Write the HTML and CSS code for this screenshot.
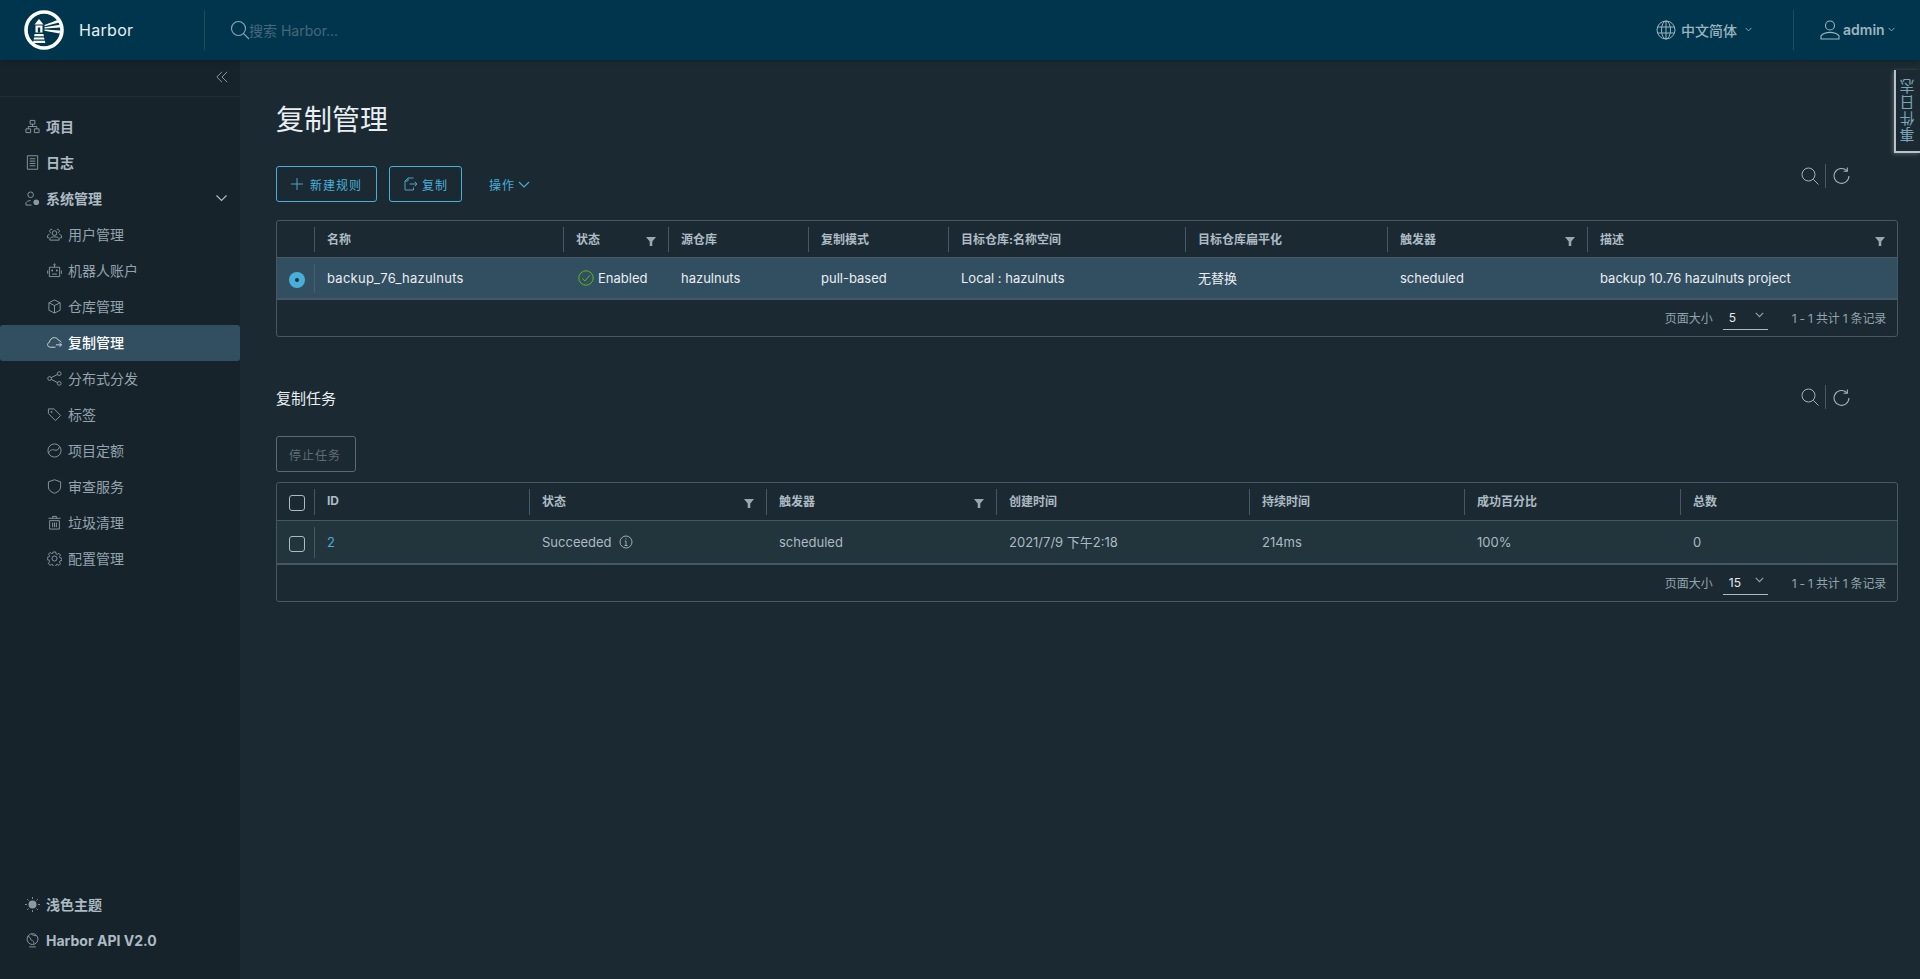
FILE: index.html
```html
<!DOCTYPE html>
<html lang="zh">
<head>
<meta charset="utf-8">
<title>Harbor</title>
<link rel="stylesheet" href="styles.css">
</head>
<body>
<header class="topbar">
  <div class="brand">
    <svg class="logo" viewBox="0 0 40 40">
      <circle cx="20" cy="20" r="18" fill="none" stroke="#fff" stroke-width="3.6"/>
      <path d="M10.500 14.500 L15 9 L19.500 14.500 Z" fill="#fff" stroke="none"/>
      <path d="M11.500 15.500h7v7h-7z" fill="#fff" stroke="none"/>
      <path d="M13.800 17.500h2.400v5h-2.400z" fill="#00364d" stroke="none"/>
      <path d="M10.600 24h8.800l.5 2.200h-9.800zM10.100 27.400h9.900l.5 2.200H9.600zM9.400 30.800h11.400l.5 2.200H9z" fill="#fff" stroke="none"/>
      <path d="M20.500 15l13-5 1.600 2.600-14.600 3.600zM20.500 17.300l15.400-2.500.5 2.800-15.900.9zM20.500 19.600l15.600 1-.4 2.800-15.200-2.600z" fill="#fff" stroke="none"/>
    </svg>
    <span class="brand-name">Harbor</span>
  </div>
  <div class="search">
    <svg class="search-icon" viewBox="0 0 20 20"><circle cx="8.500" cy="8.500" r="7" /><path d="M13.600 13.600 L19 19"/></svg>
    <span class="search-text">搜索 Harbor...</span>
  </div>
  <div class="lang">
    <svg class="globe" viewBox="0 0 20 20"><circle cx="10" cy="10" r="9"/><ellipse cx="10" cy="10" rx="4.500" ry="9"/><path d="M10 1v18M1.600 7h16.800M1.600 13h16.800"/></svg>
    <span>中文简体</span>
    <svg class="caret-lang" viewBox="0 0 8 5"><path d="M.7.7 4 4 7.300.7"/></svg>
  </div>
  <div class="user">
    <svg class="person" viewBox="0 0 20 20"><circle cx="10" cy="5.500" r="4.500"/><path d="M1 19v-3.200c2-2.300 5-3.400 9-3.400s7 1.100 9 3.400V19z"/></svg>
    <span>admin</span>
    <svg class="caret-user" viewBox="0 0 8 5"><path d="M.7.7 4 4 7.300.7"/></svg>
  </div>
</header>

<div class="shell">
  <aside class="sidebar">
    <div class="collapse">
      <svg class="collapse-icon" viewBox="0 0 12 12"><path d="M6 .8.8 6 6 11.200M11.200.8 6 6l5.200 5.200"/></svg>
    </div>
    <nav class="nav">
      <a class="item"><svg class="ic" viewBox="0 0 16 16"><path d="M5.500 1.500h5v4h-5zM1 10.500h5v4H1zM10 10.500h5v4h-5zM8 5.500v2.500M3.500 10.500V8h9v2.500"/></svg>项目</a>
      <a class="item"><svg class="ic" viewBox="0 0 16 16"><path d="M2.500.8h11v14.400h-11zM5 4h6M5 6.500h6M5 9h6M5 11.500h6"/></svg>日志</a>
      <a class="item"><svg class="ic" viewBox="0 0 16 16"><circle cx="6" cy="4" r="3"/><path d="M1 15v-2.500c1-1.500 2.500-2.200 5-2.200M1 15h6"/><circle class="solid" cx="12" cy="12" r="3"/></svg>系统管理<svg class="chev" viewBox="0 0 12 8"><path d="M1 1.500l5 5 5-5"/></svg></a>
      <a class="sub"><svg class="ic" viewBox="0 0 16 16"><circle cx="8" cy="6.500" r="2.500"/><path d="M3 14v-1.500c1-1.500 2.500-2 5-2s4 .5 5 2V14zM5.500 2.500a2 2 0 0 0-1.500 3.700M10.500 2.500a2 2 0 0 1 1.500 3.700M2.800 7.500c-1 .4-1.800 1-2.300 2v2h2M13.200 7.500c1 .4 1.800 1 2.300 2v2h-2"/></svg>用户管理</a>
      <a class="sub"><svg class="ic" viewBox="0 0 16 16"><path d="M2.500 4.500h11v10h-11zM8 4.500V2M.7 8v3.500M15.300 8v3.500M5.500 11.800h5"/><circle cx="8" cy="1.600" r=".8"/><circle class="solid" cx="5.500" cy="8" r="1"/><circle class="solid" cx="10.500" cy="8" r="1"/></svg>机器人账户</a>
      <a class="sub"><svg class="ic" viewBox="0 0 16 16"><path d="M8 1l6 3v8l-6 3-6-3V4zM2 4l6 3 6-3M8 7v8"/></svg>仓库管理</a>
      <a class="sub active"><svg class="ic" viewBox="0 0 16 16"><path d="M9 13H3.500C1.700 13 .6 11.700.6 10.300c0-1.300.9-2.300 2-2.600C3 5 5 2.800 7.800 2.800c2 0 3.700 1.100 4.500 2.900 1.300.2 2.400 1 3 2.200M9.500 10.500h6M13.300 8.500l2.200 2-2.200 2"/></svg>复制管理</a>
      <a class="sub"><svg class="ic" viewBox="0 0 16 16"><circle cx="2.800" cy="8" r="2"/><circle cx="13" cy="2.800" r="2"/><circle cx="13" cy="13.200" r="2"/><path d="M4.600 7l6.600-3.300M4.600 9l6.600 3.300"/></svg>分布式分发</a>
      <a class="sub"><svg class="ic" viewBox="0 0 16 16"><path d="M1.500 2h6l7 7-5.500 5.500-7.500-7.500z"/><circle class="solid" cx="4.800" cy="5.200" r=".9"/></svg>标签</a>
      <a class="sub"><svg class="ic" viewBox="0 0 16 16"><circle cx="8" cy="8" r="7"/><path d="M1.500 11C3 7.500 5 6.500 8 7.500c2.500.8 4 0 5-3"/></svg>项目定额</a>
      <a class="sub"><svg class="ic" viewBox="0 0 16 16"><path d="M8 .8 14.500 3v5.500c0 3-2.500 5.400-6.500 6.700-4-1.300-6.500-3.700-6.500-6.700V3z"/></svg>审查服务</a>
      <a class="sub"><svg class="ic" viewBox="0 0 16 16"><path d="M1.500 3.500h13M6 3.500v-2h4v2M2.800 6h10.400v9H2.800zM6 8v5M8 8v5M10 8v5"/></svg>垃圾清理</a>
      <a class="sub"><svg class="ic" viewBox="0 0 16 16"><circle cx="8" cy="8" r="2.700"/><path d="M6.800 1h2.400l.4 2 1.400.6 1.700-1.100 1.700 1.700-1.100 1.700.6 1.400 2 .4v2.400l-2 .4-.6 1.400 1.100 1.700-1.700 1.700-1.700-1.100-1.400.6-.4 2H6.800l-.4-2-1.400-.6-1.700 1.100-1.700-1.700L2.700 11 2.100 9.600l-2-.4V6.800l2-.4.600-1.400-1.100-1.700 1.700-1.700L5 2.700l1.400-.6z"/></svg>配置管理</a>
    </nav>
    <div class="nav-bottom">
      <a class="item"><svg class="ic" viewBox="0 0 16 16"><circle class="solid" cx="8" cy="8" r="4.300"/><path d="M8 0v2M8 14v2M0 8h2M14 8h2M2.300 2.300l1.400 1.400M12.300 12.300l1.400 1.400M2.300 13.700l1.400-1.400M12.300 3.700l1.400-1.400"/></svg>浅色主题</a>
      <a class="item"><svg class="ic" viewBox="0 0 16 16"><circle cx="8" cy="6.500" r="5.800"/><path d="M3 3.500c2 1 3 1.500 3 3s2 1 3 2.500 0 3 0 3M7 1c1 2 3 1.500 5 2M4.500 14.800h7"/></svg>Harbor API V2.0</a>
    </div>
  </aside>

  <main class="content">
    <h1 class="title">复制管理</h1>
    <div class="toolbar">
      <button class="btn btn-new"><svg class="btn-ic" viewBox="0 0 12 12"><path d="M6 0v12M0 6h12"/></svg>新建规则</button>
      <button class="btn btn-copy"><svg class="btn-ic copy-ic" viewBox="0 0 14 14"><path d="M9.500 1H4L1 4v9h8.500v-2.500M1 4h3V1M5.500 7H13M10.800 4.800 13 7l-2.200 2.200"/></svg>复制</button>
      <button class="btn-link">操作<svg class="btn-chev" viewBox="0 0 12 7"><path d="M1 1l5 5 5-5"/></svg></button>
      <div class="tools">
        <svg class="tool" viewBox="0 0 18 18"><circle cx="7.500" cy="7.500" r="6.500"/><path d="M12.300 12.300 17.500 17.500"/></svg>
        <i class="tool-sep"></i>
        <svg class="tool" viewBox="0 0 16 16"><path d="M13 3.500A7 7 0 1 0 15 8.500M13.500.5v3.500H10"/></svg>
      </div>
    </div>

    <section class="grid grid-a">
      <div class="row head cols-a">
        <div class="cell"></div>
        <div class="cell sep">名称</div>
        <div class="cell sep">状态<svg class="filter" viewBox="0 0 10 10"><path d="M0 1h10L6.300 5.500V10H3.700V5.500z"/></svg></div>
        <div class="cell sep">源仓库</div>
        <div class="cell sep">复制模式</div>
        <div class="cell sep">目标仓库:名称空间</div>
        <div class="cell sep">目标仓库扁平化</div>
        <div class="cell sep">触发器<svg class="filter" viewBox="0 0 10 10"><path d="M0 1h10L6.300 5.500V10H3.700V5.500z"/></svg></div>
        <div class="cell sep">描述<svg class="filter" viewBox="0 0 10 10"><path d="M0 1h10L6.300 5.500V10H3.700V5.500z"/></svg></div>
      </div>
      <div class="row body selected cols-a">
        <div class="cell check"><span class="radio"></span></div>
        <div class="cell sep name">backup_76_hazulnuts</div>
        <div class="cell status"><svg class="ok" viewBox="0 0 16 16"><circle cx="8" cy="8" r="7.200"/><path d="M4.300 8.300l2.600 2.700 5-5.800"/></svg>Enabled</div>
        <div class="cell">hazulnuts</div>
        <div class="cell">pull-based</div>
        <div class="cell">Local : hazulnuts</div>
        <div class="cell">无替换</div>
        <div class="cell">scheduled</div>
        <div class="cell">backup 10.76 hazulnuts project</div>
      </div>
      <div class="pager">
        <span>页面大小</span>
        <span class="size">5<svg class="size-chev" viewBox="0 0 8 5"><path d="M.7.7 4 4 7.300.7"/></svg></span>
        <span class="count">1 - 1 共计 1 条记录</span>
      </div>
    </section>

    <div class="section-head">
      <h2 class="subtitle">复制任务</h2>
      <div class="tools">
        <svg class="tool" viewBox="0 0 18 18"><circle cx="7.500" cy="7.500" r="6.500"/><path d="M12.300 12.300 17.500 17.500"/></svg>
        <i class="tool-sep"></i>
        <svg class="tool" viewBox="0 0 16 16"><path d="M13 3.500A7 7 0 1 0 15 8.500M13.500.5v3.500H10"/></svg>
      </div>
    </div>
    <button class="btn btn-disabled">停止任务</button>

    <section class="grid grid-b">
      <div class="row head cols-b">
        <div class="cell check"><span class="box"></span></div>
        <div class="cell sep">ID</div>
        <div class="cell sep">状态<svg class="filter" viewBox="0 0 10 10"><path d="M0 1h10L6.300 5.500V10H3.700V5.500z"/></svg></div>
        <div class="cell sep">触发器<svg class="filter" viewBox="0 0 10 10"><path d="M0 1h10L6.300 5.500V10H3.700V5.500z"/></svg></div>
        <div class="cell sep">创建时间</div>
        <div class="cell sep">持续时间</div>
        <div class="cell sep">成功百分比</div>
        <div class="cell sep">总数</div>
      </div>
      <div class="row body striped cols-b">
        <div class="cell check"><span class="box"></span></div>
        <div class="cell sep link">2</div>
        <div class="cell">Succeeded<svg class="info" viewBox="0 0 14 14"><circle cx="7" cy="7" r="6"/><path d="M7 6v4.200M5.500 10.500h3M5.800 6H7"/><circle class="solid" cx="7" cy="3.800" r=".6"/></svg></div>
        <div class="cell">scheduled</div>
        <div class="cell">2021/7/9 下午2:18</div>
        <div class="cell">214ms</div>
        <div class="cell">100%</div>
        <div class="cell">0</div>
      </div>
      <div class="pager">
        <span>页面大小</span>
        <span class="size">15<svg class="size-chev" viewBox="0 0 8 5"><path d="M.7.7 4 4 7.300.7"/></svg></span>
        <span class="count">1 - 1 共计 1 条记录</span>
      </div>
    </section>
  </main>
</div>
<div class="event-tab">事件日志</div>
</body>
</html>
```
FILE: styles.css
```css
* { box-sizing: border-box; }
html, body { height: 100%; }
body {
  margin: 0;
  overflow: hidden;
  background: #1b2a32;
  color: #acbac3;
  font-family: Inter, "Noto Sans CJK SC", sans-serif;
  font-size: 13px;
}
svg { fill: none; stroke: currentColor; flex: none; }
.solid { fill: currentColor; stroke: none; }
h1, h2 { margin: 0; font-weight: 400; }
button { font: inherit; background: none; cursor: default; }

/* top bar */
.topbar {
  height: 60px;
  background: #00364d;
  display: flex;
  align-items: center;
  box-shadow: 0 1px 4px rgba(0, 0, 0, .25);
  position: relative;
}
.brand {
  width: 205px;
  height: 40px;
  padding-left: 24px;
  display: flex;
  align-items: center;
  border-right: 1px solid #1b4c60;
}
.logo { width: 40px; height: 40px; }
.brand-name { margin-left: 15px; font-size: 16px; color: #e8f0f4; letter-spacing: .3px; padding-bottom: 1px; }
.search {
  flex: 1;
  display: flex;
  align-items: center;
  padding-left: 25px;
  color: #47677a;
}
.search-icon { width: 20px; height: 20px; color: #8fa8b6; stroke-width: 1.100; }
.search-text { font-size: 14px; margin-left: -1px; }
.lang {
  width: 137px;
  display: flex;
  align-items: center;
  color: #9db4c0;
  font-size: 14px;
  font-weight: 500;
  padding-bottom: 1px;
}
.globe { width: 20px; height: 20px; margin-right: 5px; stroke-width: 1; }
.caret-lang { width: 7px; height: 5px; margin-left: 8px; stroke-width: 1; }
.user {
  width: 127px;
  height: 40px;
  padding-left: 26px;
  display: flex;
  align-items: center;
  color: #9db4c0;
  font-size: 14px;
  font-weight: 600;
  border-left: 1px solid #1b4c60;
  padding-bottom: 1px;
}
.person { width: 20px; height: 20px; margin-right: 3px; stroke-width: 1.100; }
.caret-user { width: 7px; height: 5px; margin-left: 3px; stroke-width: 1; }

/* shell */
.shell { display: flex; height: 919px; }
.sidebar {
  width: 240px;
  flex: none;
  background: #17232b;
  display: flex;
  flex-direction: column;
  padding-bottom: 20px;
}
.collapse {
  height: 37px;
  border-bottom: 1px solid #1e2d36;
  display: flex;
  justify-content: flex-end;
  align-items: center;
  padding: 0 12px 3px 0;
  color: #87979f;
}
.collapse-icon { width: 12px; height: 12px; stroke-width: 1; }
.nav { padding-top: 12px; flex: 1; }
.item, .sub {
  height: 36px;
  display: flex;
  align-items: center;
  font-size: 14px;
  border-radius: 3px;
  padding-bottom: 2px;
}
.item { padding-left: 25px; color: #acbac3; font-weight: 700; }
.sub { padding-left: 47px; color: #93a4ae; }
.ic { width: 15px; height: 15px; margin-right: 6px; color: #8a9aa3; stroke-width: 1; }
.active { background: #324f62; color: #fff; font-weight: 500; }
.active .ic { color: #d5dde2; }
.chev { width: 13px; height: 8px; margin-left: auto; margin-right: 12px; stroke-width: 1.100; color: #b5c1c7; }

/* content */
.content { flex: 1; padding: 0 22px 0 36px; min-width: 0; }
.title {
  font-size: 28px;
  line-height: 36px;
  margin-top: 42px;
  color: #e8eef1;
}
.toolbar {
  display: flex;
  align-items: center;
  height: 36px;
  margin-top: 28px;
}
.btn {
  height: 36px;
  border: 1px solid #49afd9;
  border-radius: 3px;
  color: #49afd9;
  font-size: 12px;
  letter-spacing: 1px;
  display: inline-flex;
  align-items: center;
  padding: 0 13px;
  white-space: nowrap;
}
.btn-new { width: 101px; margin-right: 12px; padding: 0 14px; }
.btn-copy { width: 73px; padding-left: 14px; }
.btn-ic { width: 12px; height: 12px; margin-right: 7px; stroke-width: 1; color: #4da2c7; }
.copy-ic { width: 14px; height: 14px; margin-right: 4px; }
.btn-link {
  border: 0;
  margin-left: 27px;
  padding: 0;
  display: inline-flex;
  align-items: center;
  color: #49afd9;
  font-size: 12px;
  letter-spacing: 1px;
}
.btn-chev { width: 12px; height: 7px; margin-left: 3px; stroke-width: 1.100; }
.tools { margin-left: auto; margin-right: 48px; display: flex; align-items: center; color: #a3b3bb; margin-top: -17px; }
.tool { width: 18px; height: 18px; stroke-width: 1; }
.tool + .tool-sep + .tool { width: 17px; height: 17px; }
.tool-sep { width: 1px; height: 24px; background: #485764; margin: 0 7px 0 6px; }

/* data grids */
.grid {
  border: 1px solid #485764;
  border-radius: 3px;
  margin-top: 18px;
}
.row { display: grid; }
.cols-a { grid-template-columns: 37px 249px 105px 140px 140px 237px 202px 200px 1fr; }
.cols-b { grid-template-columns: 37px 215px 237px 230px 253px 215px 216px 1fr; }
.head { height: 37px; border-bottom: 1px solid #485764; }
.grid-b .head { height: 38px; }
.head .cell {
  font-size: 12px;
  font-weight: 700;
  color: #adbbc4;
  padding-right: 8px;
  padding-bottom: 2px;
}
.cell {
  position: relative;
  display: flex;
  align-items: center;
  padding-left: 13px;
  min-width: 0;
  white-space: nowrap;
}
.head .sep::before, .body .sep::before {
  content: "";
  position: absolute;
  left: 0;
  top: 6px;
  bottom: 5px;
  width: 1px;
  background: #485764;
}
.filter { width: 10px; height: 10px; margin-left: auto; margin-right: 4px; margin-top: 5px; fill: #9aa7ae; stroke: none; }
.body { height: 42px; border-bottom: 2px solid #485764; font-size: 13px; }
.body .cell { padding-bottom: 1px; }
.selected { background: #324f62; color: #eaedf0; }
.selected .sep::before { background: #46606f; }
.name { letter-spacing: .25px; }
.status { padding-left: 15px; }
.striped { background: #22343c; color: #acbac3; height: 44px; }
.cell.check { padding-left: 12px; padding-bottom: 0; }
.radio {
  width: 16px;
  height: 16px;
  border-radius: 50%;
  margin-top: 3px;
  background: #49afd9;
  position: relative;
}
.radio::after {
  content: "";
  position: absolute;
  left: 6px;
  top: 6px;
  width: 4px;
  height: 4px;
  border-radius: 50%;
  background: #21333b;
}
.box {
  width: 16px;
  height: 16px;
  border: 1px solid #acbac3;
  border-radius: 3px;
  background: #1b2a32;
}
.head .box { margin-top: 2px; }
.body .box { margin-top: 3px; background: #22343c; }
.ok { width: 16px; height: 16px; color: #60b515; margin-right: 4px; stroke-width: 1; margin-top: 1px; }
.link { color: #49afd9; }
.info { width: 14px; height: 14px; margin-left: 7px; stroke-width: .9; color: #acbac3; margin-top: 1px; }
.pager {
  height: 36px;
  display: flex;
  align-items: center;
  justify-content: flex-end;
  padding: 0 11px 2px 0;
  font-size: 12px;
  color: #93a4ae;
}
.size {
  width: 45px;
  height: 24px;
  margin-left: 10px;
  border-bottom: 1px solid #acbac3;
  display: flex;
  align-items: center;
  padding-left: 6px;
  color: #e3e8ea;
  font-size: 12px;
  margin-top: 2px;
}
.size-chev { width: 9px; height: 6px; margin-left: auto; margin-right: 4px; margin-top: -5px; stroke-width: 1; color: #93a4ae; }
.count { margin-left: 24px; letter-spacing: -.2px; }

.section-head {
  display: flex;
  align-items: center;
  height: 24px;
  margin-top: 48px;
}
.subtitle { font-size: 15px; color: #e8eef1; }
.section-head .tools { margin-top: 0; }
.btn-disabled {
  margin-top: 27px;
  width: 80px;
  border-color: #5b6a73;
  color: #5f6e76;
  display: flex;
  padding: 0 12px;
}
.grid-b { margin-top: 10px; }

/* event tab */
.event-tab {
  position: absolute;
  top: 70px;
  right: 0;
  width: 26px;
  height: 83px;
  writing-mode: vertical-rl;
  transform: rotate(180deg);
  display: flex;
  align-items: center;
  justify-content: center;
  font-size: 15px;
  letter-spacing: 1px;
  color: #7fa3b8;
  border-right: 2px solid #b9c2c6;
  border-top: 2px solid #b9c2c6;
  box-shadow: 1px -1px 4px rgba(255, 255, 255, .25);
}
```
